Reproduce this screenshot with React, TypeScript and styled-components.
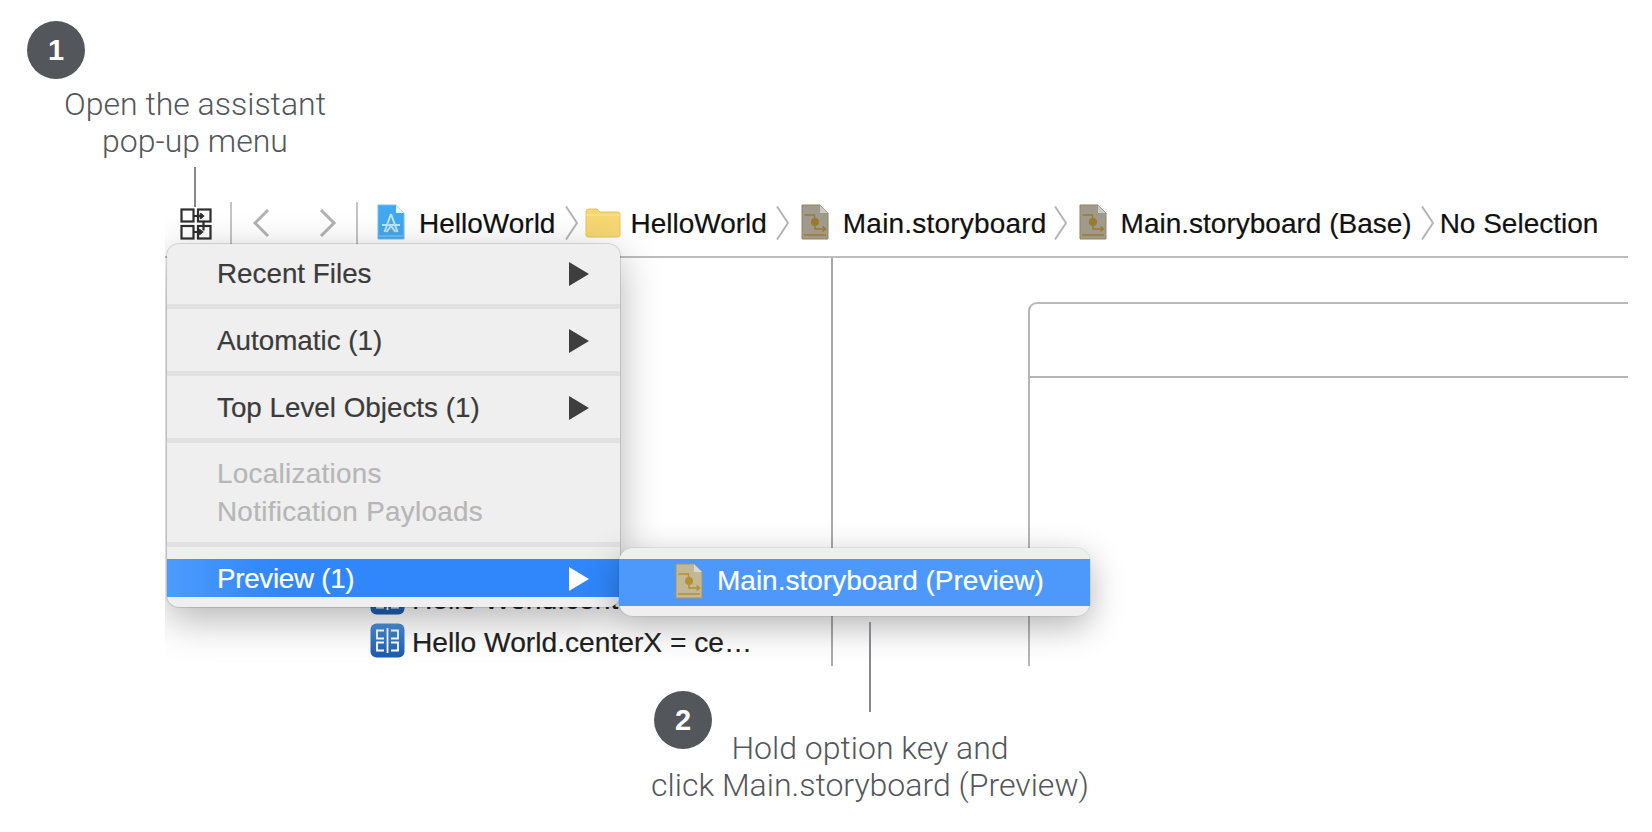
import React from "react"
import styled, { createGlobalStyle } from "styled-components"

const GlobalStyle = createGlobalStyle`
  html, body {
    margin: 0;
    padding: 0;
    background: #ffffff;
  }
`

const UI_FONT = `"Liberation Sans", Arial, sans-serif`

const Page = styled.div`
  width: 1652px;
  height: 832px;
  padding-top: 21px;
  box-sizing: border-box;
  overflow: hidden;
  background: #ffffff;
  font-family: ${UI_FONT};
`

const Badge = styled.div<{ $left: number }>`
  flex: none;
  width: 58px;
  height: 58px;
  margin-left: ${(p) => p.$left}px;
  border-radius: 50%;
  background: #53575c;
  color: #ffffff;
  font-size: 29px;
  font-weight: 700;
  display: flex;
  align-items: center;
  justify-content: center;
`

const Caption = styled.div<{ $width: number }>`
  width: ${(p) => p.$width}px;
  flex: none;
  font-family: Roboto, "Liberation Sans", sans-serif;
  font-weight: 300;
  font-size: 32px;
  line-height: 37px;
  color: #53575c;
  text-align: center;
  white-space: nowrap;
`

const TopCaption = styled(Caption)`
  margin-top: 7px;
`

const Leader = styled.div<{ $left: number; $height: number }>`
  position: relative;
  z-index: 2;
  width: 1.5px;
  height: ${(p) => p.$height}px;
  margin-left: ${(p) => p.$left}px;
  background: #85888c;
`

const TopLeader = styled(Leader)`
  margin-top: 7px;
  margin-bottom: -7px;
`

const BottomLeader = styled(Leader)`
  margin-top: -44px;
`

const Shot = styled.div`
  position: relative;
  width: 1463px;
  height: 466px;
  margin-left: 165px;
  overflow: hidden;
  display: flex;
  flex-direction: column;
`

const Toolbar = styled.div`
  flex: none;
  height: 56px;
  border-bottom: 2px solid #bdbdbd;
  display: flex;
  align-items: flex-start;
  font-size: 28px;
  color: #111111;
  -webkit-text-stroke: 0.2px #111111;
`

const ToolDivider = styled.div<{ $left: number }>`
  flex: none;
  width: 2px;
  height: 44px;
  margin-top: 2px;
  margin-left: ${(p) => p.$left}px;
  background: #c4c4c4;
`

const ToolSlot = styled.div<{ $left: number; $top: number }>`
  flex: none;
  display: flex;
  margin-left: ${(p) => p.$left}px;
  margin-top: ${(p) => p.$top}px;
`

const CrumbLabel = styled.span<{ $left: number; $spacing?: number }>`
  flex: none;
  margin-left: ${(p) => p.$left}px;
  letter-spacing: ${(p) => p.$spacing ?? 0}px;
  line-height: 57px;
  margin-top: -5px;
  height: 57px;
  white-space: nowrap;
`

const Canvas = styled.div`
  flex: 1;
  min-height: 0;
  display: flex;
`

const OutlineColumn = styled.div`
  flex: none;
  width: 461px;
  border-right: 2px solid #a9a9a9;
  padding: 0 0 8px 205px;
  display: flex;
  flex-direction: column;
  justify-content: flex-end;
  gap: 8px;
`

const OutlineRow = styled.div`
  height: 35px;
  display: flex;
  align-items: center;
  gap: 7px;
  font-size: 28.2px;
  color: #222222;
  -webkit-text-stroke: 0.2px #222222;
  white-space: nowrap;
`

const OutlineLabel = styled.span`
  padding-top: 3px;
`

const MiddleColumn = styled.div`
  flex: none;
  width: 195px;
`

const SceneColumn = styled.div`
  flex: 1;
  padding-top: 44px;
`

const SceneBox = styled.div`
  height: 100%;
  box-sizing: border-box;
  border-left: 2px solid #b5b5b5;
  border-top: 2px solid #bbbbbb;
  border-top-left-radius: 9px;
`

const SceneHeader = styled.div`
  height: 72px;
  border-bottom: 2px solid #b5b5b5;
`

const Menu = styled.div`
  position: absolute;
  left: 2px;
  top: 44px;
  width: 453px;
  border-radius: 12px;
  background: #efefef;
  box-shadow: 0 0 0 1px rgba(0, 0, 0, 0.12), 0 12px 40px rgba(0, 0, 0, 0.3);
  font-size: 27.8px;
  z-index: 1;
`

const MenuGroup = styled.div<{ $top: number; $bottom: number; $rule?: boolean }>`
  padding: ${(p) => p.$top}px 0 ${(p) => p.$bottom}px;
  border-bottom: ${(p) => (p.$rule ? "5px solid #e1e1e1" : "none")};
`

const MenuRow = styled.div<{ $disabled?: boolean; $active?: boolean }>`
  height: 38px;
  box-sizing: border-box;
  padding: 2px 31px 0 50px;
  display: flex;
  align-items: center;
  justify-content: space-between;
  white-space: nowrap;
  letter-spacing: ${(p) => (p.$active ? "-0.3px" : p.$disabled ? "0.3px" : "0")};
  color: ${(p) => (p.$active ? "#ffffff" : p.$disabled ? "#b6b6b6" : "#3b3b3b")};
  -webkit-text-stroke: 0.2px ${(p) => (p.$active ? "#ffffff" : p.$disabled ? "#b6b6b6" : "#3b3b3b")};
  background: ${(p) =>
    p.$active ? "linear-gradient(90deg, #4d9bfc 0, #2f87fb 110px)" : "transparent"};
`

const Caret = styled.div<{ $active?: boolean }>`
  width: 0;
  height: 0;
  border-style: solid;
  border-width: 12px 0 12px 20px;
  border-color: transparent transparent transparent ${(p) => (p.$active ? "#ffffff" : "#3e3e3e")};
`

const Submenu = styled.div`
  position: absolute;
  left: 454px;
  top: 348px;
  width: 471px;
  padding: 11px 0 10px;
  border-radius: 14px;
  background: #efefef;
  box-shadow: 0 0 0 1px rgba(0, 0, 0, 0.06), 0 10px 34px rgba(0, 0, 0, 0.3);
  z-index: 2;
`

const SubmenuRow = styled.div`
  height: 47px;
  box-sizing: border-box;
  padding: 0 0 3px 56px;
  display: flex;
  align-items: center;
  gap: 14px;
  background: #4c98fb;
  color: #ffffff;
  font-size: 28px;
  -webkit-text-stroke: 0.2px #ffffff;
  white-space: nowrap;
`

const BottomRow = styled.div`
  display: flex;
  align-items: flex-start;
  margin-top: -21px;
`

const BottomCaption = styled(Caption)`
  margin-left: -92px;
  margin-top: 39px;
`

function AssistantIcon() {
  return (
    <svg width="32" height="32" viewBox="0 0 32 32" fill="none" stroke="#2e2e2e" strokeWidth="2.2">
      <rect x="1.5" y="1.5" width="12" height="12" />
      <rect x="18" y="1.5" width="12.500" height="12" />
      <rect x="1.5" y="18" width="12" height="12.500" />
      <rect x="18" y="18" width="12.500" height="12.500" />
      <path d="M13.500 8h9M20 5.500l3 2.500-3 2.500M23.500 13.500v9M13.500 24h8M19 21.500l3 2.500-3 2.500" />
    </svg>
  )
}

function NavChevron({ flip, tall }: { flip?: boolean; tall?: boolean }) {
  if (tall) {
    return (
      <svg width="13" height="34" viewBox="0 0 13 34" fill="none" stroke="#b4b4b4" strokeWidth="2">
        <path d="M1 0.500l11 16.500-11 16.500" />
      </svg>
    )
  }
  return (
    <svg width="18" height="30" viewBox="0 0 18 30" fill="none" stroke="#b2b2b2" strokeWidth="3">
      <path d={flip ? "M2 2l13 13-13 13" : "M16 2L3 15l13 13"} />
    </svg>
  )
}

function AppFileIcon() {
  return (
    <svg width="28" height="36" viewBox="0 0 28 36">
      <path d="M1 1h18l8 8v26H1z" fill="#42a8ef" stroke="#72c0f4" strokeWidth="1" />
      <path d="M19 1v8h8z" fill="#e4f2fb" />
      <path
        d="M14 10L7.500 28M14 10l6.500 18M5 21h18M9.500 28l4.500-6 4.500 6"
        fill="none"
        stroke="#bfe3fa"
        strokeWidth="2"
      />
      <path d="M2 32h24" stroke="#8fd0f7" strokeWidth="1" />
    </svg>
  )
}

function FolderIcon() {
  return (
    <svg width="36" height="30" viewBox="0 0 36 30">
      <path d="M1 4q0-3 3-3h8l3 3h18q2 0 2 2v21q0 2-2 2H3q-2 0-2-2z" fill="#f5d872" stroke="#e6c458" />
      <path d="M1 7h34" stroke="#fbe897" strokeWidth="1" />
    </svg>
  )
}

function StoryboardIcon({ light }: { light?: boolean }) {
  const stroke = light ? "#b48f33" : "#9a7a2c"
  return (
    <svg width="28" height="36" viewBox="0 0 28 36" style={{ flex: "none" }}>
      <path
        d="M1 1h18l8 8v26H1z"
        fill={light ? "#c3b896" : "#a09a8c"}
        stroke={light ? "#a3946c" : "#8e8460"}
        strokeWidth="1"
      />
      <path d="M19 1v8h8z" fill={light ? "#d8d8d2" : "#c9c9c6"} />
      <circle cx="14" cy="18" r="4" fill={stroke} />
      <path
        d="M3.500 11h10v4M14 22v3h10M21.500 22.500l3 2.500-3 2.500M3 31h22"
        fill="none"
        stroke={stroke}
        strokeWidth="1.500"
      />
    </svg>
  )
}

function ConstraintIcon() {
  return (
    <svg width="35" height="35" viewBox="0 0 35 35" style={{ flex: "none" }}>
      <defs>
        <linearGradient id="constraintFill" x1="0" y1="0" x2="0" y2="1">
          <stop offset="0" stopColor="#4a8fdc" />
          <stop offset="1" stopColor="#1c5bad" />
        </linearGradient>
      </defs>
      <rect x="0.500" y="0.500" width="34" height="34" rx="6" fill="url(#constraintFill)" />
      <path
        d="M17.500 5v25M14 7.500H7v8h7M14 19.500H7v8h7M21 7.500h7v8h-7M21 19.500h7v8h-7"
        fill="none"
        stroke="#ffffff"
        strokeWidth="1.800"
      />
    </svg>
  )
}

export default function App() {
  return (
    <Page>
      <GlobalStyle />
      <Badge $left={27}>1</Badge>
      <TopCaption $width={390}>
        Open the assistant
        <br />
        pop-up menu
      </TopCaption>
      <TopLeader $left={194} $height={40} />

      <Shot>
        <Toolbar>
          <ToolSlot $left={15} $top={8}>
            <AssistantIcon />
          </ToolSlot>
          <ToolDivider $left={18} />
          <ToolSlot $left={20} $top={8}>
            <NavChevron />
          </ToolSlot>
          <ToolSlot $left={49} $top={8}>
            <NavChevron flip />
          </ToolSlot>
          <ToolDivider $left={19} />
          <ToolSlot $left={19} $top={4}>
            <AppFileIcon />
          </ToolSlot>
          <CrumbLabel $left={14}>HelloWorld</CrumbLabel>
          <ToolSlot $left={10} $top={6}>
            <NavChevron tall />
          </ToolSlot>
          <ToolSlot $left={7} $top={8}>
            <FolderIcon />
          </ToolSlot>
          <CrumbLabel $left={9}>HelloWorld</CrumbLabel>
          <ToolSlot $left={9} $top={6}>
            <NavChevron tall />
          </ToolSlot>
          <ToolSlot $left={12} $top={4}>
            <StoryboardIcon />
          </ToolSlot>
          <CrumbLabel $left={14} $spacing={0.2}>
            Main.storyboard
          </CrumbLabel>
          <ToolSlot $left={7} $top={6}>
            <NavChevron tall />
          </ToolSlot>
          <ToolSlot $left={12} $top={4}>
            <StoryboardIcon />
          </ToolSlot>
          <CrumbLabel $left={14}>Main.storyboard (Base)</CrumbLabel>
          <ToolSlot $left={9} $top={6}>
            <NavChevron tall />
          </ToolSlot>
          <CrumbLabel $left={6}>No Selection</CrumbLabel>
        </Toolbar>

        <Canvas>
          <OutlineColumn>
            <OutlineRow>
              <ConstraintIcon />
              <OutlineLabel>Hello World.centerY = ce…</OutlineLabel>
            </OutlineRow>
            <OutlineRow>
              <ConstraintIcon />
              <OutlineLabel>Hello World.centerX = ce…</OutlineLabel>
            </OutlineRow>
          </OutlineColumn>
          <MiddleColumn />
          <SceneColumn>
            <SceneBox>
              <SceneHeader />
            </SceneBox>
          </SceneColumn>
        </Canvas>

        <Menu>
          <MenuGroup $top={10} $bottom={12} $rule>
            <MenuRow>
              Recent Files
              <Caret />
            </MenuRow>
          </MenuGroup>
          <MenuGroup $top={12} $bottom={12} $rule>
            <MenuRow>
              Automatic (1)
              <Caret />
            </MenuRow>
          </MenuGroup>
          <MenuGroup $top={12} $bottom={12} $rule>
            <MenuRow>
              Top Level Objects (1)
              <Caret />
            </MenuRow>
          </MenuGroup>
          <MenuGroup $top={11} $bottom={12} $rule>
            <MenuRow $disabled>Localizations</MenuRow>
            <MenuRow $disabled>Notification Payloads</MenuRow>
          </MenuGroup>
          <MenuGroup $top={12} $bottom={10}>
            <MenuRow $active>
              Preview (1)
              <Caret $active />
            </MenuRow>
          </MenuGroup>
        </Menu>

        <Submenu>
          <SubmenuRow>
            <StoryboardIcon light />
            Main.storyboard (Preview)
          </SubmenuRow>
        </Submenu>
      </Shot>

      <BottomLeader $left={869} $height={90} />
      <BottomRow>
        <Badge $left={654}>2</Badge>
        <BottomCaption $width={500}>
          Hold option key and
          <br />
          click Main.storyboard (Preview)
        </BottomCaption>
      </BottomRow>
    </Page>
  )
}
